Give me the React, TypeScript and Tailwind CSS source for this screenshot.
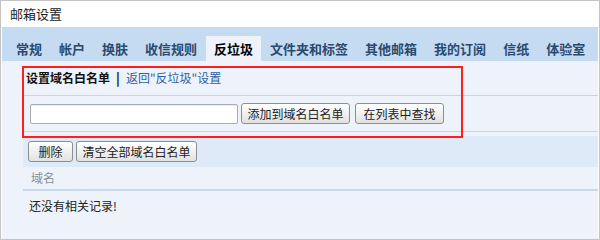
const TABS = ["常规", "帐户", "换肤", "收信规则", "反垃圾", "文件夹和标签", "其他邮箱", "我的订阅", "信纸", "体验室"];

function Btn({ label, w }: { label: string; w: string }) {
  return (
    <button
      className={`${w} h-[21px] flex items-center justify-center rounded-[3px] border border-[#8e8e8e] bg-linear-to-b from-white to-[#e2e2e2] text-[12px] text-[#222] leading-none`}
    >
      {label}
    </button>
  );
}

export default function App() {
  return (
    <div
      className="relative w-[600px] h-[240px] flex flex-col border border-[#c4c4c4] bg-white overflow-hidden"
      style={{ fontFamily: '"Noto Sans CJK SC", "Liberation Sans", sans-serif' }}
    >
      {/* title */}
      <div className="h-[26px] shrink-0 flex items-center pl-[9px] text-[13px] text-[#222]">邮箱设置</div>

      {/* tabs */}
      <div className="h-[34px] shrink-0 flex items-end gap-[1px] pl-[6px] bg-[#c5dbf2] mx-[1px]">
        {TABS.map((t) => (
          <div
            key={t}
            className={
              t === "反垃圾"
                ? "h-[25px] px-2 flex items-center text-[13px] font-bold text-black bg-[#eef3fb]"
                : "h-[25px] px-2 flex items-center text-[13px] font-bold text-[#2b4a6f]"
            }
          >
            {t}
          </div>
        ))}
      </div>

      {/* content */}
      <div className="flex-1 flex flex-col bg-[#eef3fb] mx-[1px] pl-[21px]">
        <div className="h-[35px] shrink-0 flex items-center gap-[6px] pl-[3px] border-b border-[#c2d5ec]">
          <span className="text-[12px] font-bold text-[#111]">设置域名白名单</span>
          <span className="text-[13px] font-bold text-[#111]">|</span>
          <span className="text-[12px] text-[#2f5f9e]">返回"反垃圾"设置</span>
        </div>

        <div className="h-[36px] shrink-0 flex items-center gap-[3px] pl-[7px] border-b border-[#c2d5ec]">
          <input className="w-[208px] h-[20px] border border-[#a7adb5] rounded-[2px] bg-white shadow-[inset_0_1px_1px_rgba(0,0,0,0.08)] outline-none" />
          <Btn label="添加到域名白名单" w="w-[109px]" />
          <Btn label="在列表中查找" w="w-[89px] ml-[2px]" />
        </div>

        <div className="h-[31px] shrink-0 mt-[4px] flex items-center gap-[3px] pl-[5px] bg-[#deeaf8]">
          <Btn label="删除" w="w-[45px]" />
          <Btn label="清空全部域名白名单" w="w-[121px]" />
        </div>

        <div className="h-[24px] shrink-0 flex items-center pl-[8px] text-[12px] text-[#8a8f96] border-b-2 border-[#c9d9ec]">域名</div>

        <div className="h-[29px] shrink-0 flex items-center pl-[6px] text-[12px] text-[#222]">还没有相关记录!</div>
      </div>

      {/* annotation */}
      <div className="absolute left-[21px] top-[65px] w-[441px] h-[72px] border-2 border-[#ff1d1d]" />
    </div>
  );
}
